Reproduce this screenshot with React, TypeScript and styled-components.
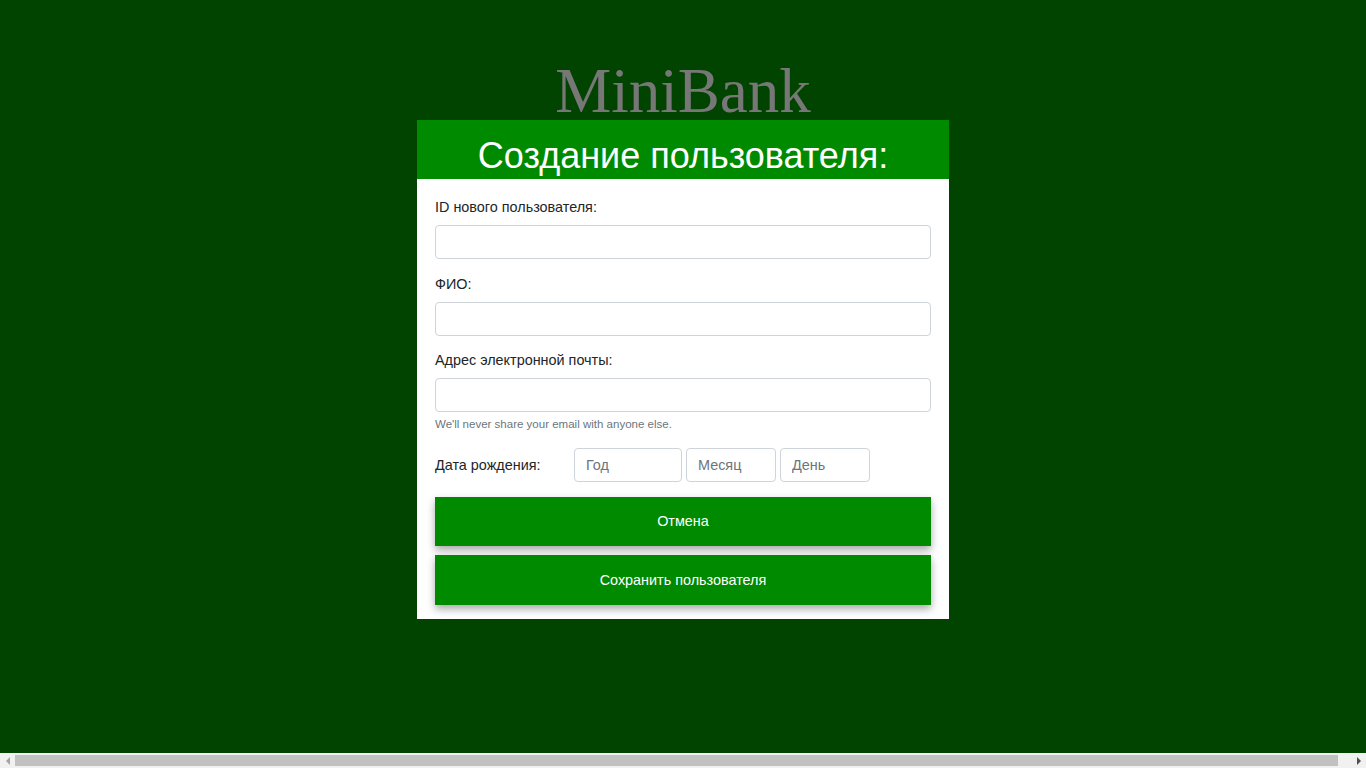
import React from "react";
import styled, { createGlobalStyle } from "styled-components";

const Global = createGlobalStyle`
  html, body {
    margin: 0;
    padding: 0;
    background: #004400;
  }
  body {
    font-family: "Liberation Sans", Arial, sans-serif;
    color: #212529;
  }
  * { box-sizing: border-box; }
`;

const Page = styled.div`
  height: 768px;
  padding-top: 62px;
  display: flex;
  flex-direction: column;
  align-items: center;
`;

const Brand = styled.h1`
  margin: 0;
  font-family: "Liberation Serif", "Times New Roman", serif;
  font-weight: 400;
  font-size: 63px;
  line-height: 58px;
  color: #777777;
`;

const Card = styled.div`
  width: 532px;
  background: #ffffff;
`;

const CardHeader = styled.h2`
  margin: 0;
  height: 59px;
  padding-top: 12px;
  background: #008a00;
  color: #ffffff;
  text-align: center;
  font-weight: 400;
  font-size: 36px;
  line-height: 47px;
`;

const Form = styled.form`
  padding: 17px 18px 14px;
  display: flex;
  flex-direction: column;
`;

const Group = styled.div`
  display: flex;
  flex-direction: column;
  margin-bottom: 13.5px;
`;

const Label = styled.label`
  font-size: 14.4px;
  line-height: 22px;
  margin-bottom: 7px;
`;

const Input = styled.input<{ $w?: number }>`
  height: 34px;
  width: ${(p) => (p.$w ? `${p.$w}px` : "100%")};
  border: 1px solid #ced4da;
  border-radius: 4px;
  padding: 0 11px;
  font-family: inherit;
  font-size: 14.4px;
  color: #495057;
  background: #fff;
  outline: none;
  &::placeholder { color: #6c757d; }
`;

const Help = styled.small`
  margin-top: 4px;
  font-size: 11.52px;
  line-height: 17px;
  color: #6c757d;
`;

const DateRow = styled.div`
  display: flex;
  align-items: center;
  gap: 4px;
  margin-top: 1px;
  margin-bottom: 15px;
`;

const DateLabel = styled.label`
  width: 135px;
  font-size: 14.4px;
  line-height: 22px;
`;

const Button = styled.button<{ $h: number; $mb?: number }>`
  height: ${(p) => p.$h}px;
  margin-bottom: ${(p) => p.$mb ?? 0}px;
  border: none;
  background: #008a00;
  color: #ffffff;
  font-family: inherit;
  font-size: 14.4px;
  box-shadow: 0 4px 8px rgba(0, 0, 0, 0.35);
  cursor: pointer;
`;

/* Browser horizontal scrollbar as seen in the screenshot */
const ScrollBar = styled.div`
  position: fixed;
  left: 0;
  right: 0;
  bottom: 0;
  height: 15px;
  background: #f1f1f1;
  display: flex;
  align-items: center;
`;

const Arrow = styled.div<{ $dir: "left" | "right" }>`
  width: 15px;
  height: 15px;
  flex: none;
  display: flex;
  align-items: center;
  justify-content: center;
  &::before {
    content: "";
    width: 0;
    height: 0;
    border-top: 4px solid transparent;
    border-bottom: 4px solid transparent;
    ${(p) =>
      p.$dir === "left"
        ? "border-right: 4px solid #a3a3a3;"
        : "border-left: 4px solid #505050;"}
  }
`;

const Track = styled.div`
  flex: 1;
  height: 15px;
  padding: 2px 0;
  display: flex;
`;

const Thumb = styled.div`
  width: 99%;
  height: 11px;
  background: #c1c1c1;
`;

export default function App() {
  return (
    <>
      <Global />
      <Page>
        <Brand>MiniBank</Brand>
        <Card>
          <CardHeader>Создание пользователя:</CardHeader>
          <Form onSubmit={(e) => e.preventDefault()}>
            <Group>
              <Label htmlFor="uid">ID нового пользователя:</Label>
              <Input id="uid" type="text" />
            </Group>
            <Group>
              <Label htmlFor="fio">ФИО:</Label>
              <Input id="fio" type="text" />
            </Group>
            <Group>
              <Label htmlFor="email">Адрес электронной почты:</Label>
              <Input id="email" type="email" />
              <Help>We'll never share your email with anyone else.</Help>
            </Group>
            <DateRow>
              <DateLabel>Дата рождения:</DateLabel>
              <Input $w={108} placeholder="Год" />
              <Input $w={90} placeholder="Месяц" />
              <Input $w={90} placeholder="День" />
            </DateRow>
            <Button type="button" $h={49} $mb={9}>Отмена</Button>
            <Button type="submit" $h={50}>Сохранить пользователя</Button>
          </Form>
        </Card>
      </Page>
      <ScrollBar>
        <Arrow $dir="left" />
        <Track>
          <Thumb />
        </Track>
        <Arrow $dir="right" />
      </ScrollBar>
    </>
  );
}
